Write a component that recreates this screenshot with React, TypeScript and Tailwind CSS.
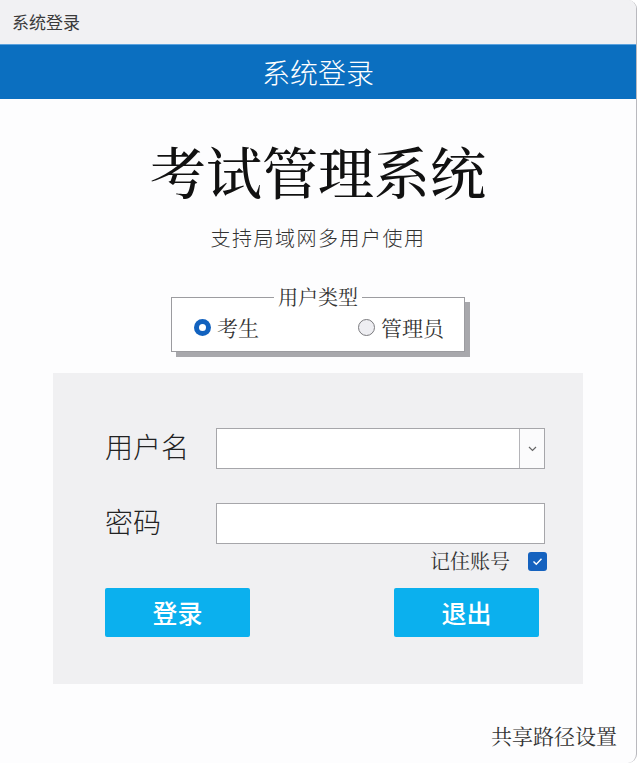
import React from "react";

const serif = "font-['Noto_Serif_CJK_SC','Noto_Sans_CJK_SC',serif]";
const sans = "font-['Noto_Sans_CJK_SC','Liberation_Sans',sans-serif]";

function Radio({ checked, label }: { checked?: boolean; label: string }) {
  return (
    <label className="flex items-center gap-[6px]">
      {checked ? (
        <span className="flex h-[17px] w-[17px] items-center justify-center rounded-full bg-[#1262bf]">
          <span className="h-[7px] w-[7px] rounded-full bg-white" />
        </span>
      ) : (
        <span className="h-[17px] w-[17px] rounded-full border border-[#7a7a7e] bg-[#eeeef2]" />
      )}
      <span className={`${serif} text-[21px] leading-none text-[#333]`}>{label}</span>
    </label>
  );
}

export default function App() {
  return (
    <div className="h-[763px] w-[640px] overflow-hidden bg-white">
      <div
        className={`${sans} flex h-[763px] w-[637px] flex-col overflow-hidden rounded-r-[9px] border-r border-[#b9b9be] bg-[#fdfdfe]`}
      >
        <div className="flex h-[44px] items-center bg-[#f1f1f3] pl-3 text-[17px] text-[#3a3a3a]">
          系统登录
        </div>
        <div className="flex h-[55px] items-center justify-center border-t border-[#5aa2de] bg-[#0b6fc0] text-[28px] font-light text-white">
          系统登录
        </div>

        <h1
          className={`${serif} mt-[43px] text-center text-[56px] leading-[56px] font-medium text-[#111]`}
        >
          考试管理系统
        </h1>
        <p className="mt-[28px] text-center text-[20px] leading-[24px] font-light tracking-[1.5px] text-[#333]">
          支持局域网多用户使用
        </p>

        <fieldset className="mx-auto mt-[35px] h-[67px] w-[294px] border border-[#9c9ca0] bg-white shadow-[5px_5px_0_#a8a8ac]">
          <legend className={`${serif} mx-auto px-1 text-[20px] leading-[24px] text-[#333]`}>
            用户类型
          </legend>
          <div className="mt-[8px] flex items-center pl-[22px]">
            <Radio checked label="考生" />
            <div className="ml-[99px]">
              <Radio label="管理员" />
            </div>
          </div>
        </fieldset>

        <div className="mx-auto mt-[21px] h-[311px] w-[530px] bg-[#f0f0f2] pt-[55px] pl-[52px]">
          <div className="flex h-[41px] items-center">
            <span className="mb-[6px] w-[111px] text-[28px] leading-none font-light text-[#222]">
              用户名
            </span>
            <div className="flex h-[41px] w-[329px] border border-[#a6a6aa] bg-white">
              <div className="flex-1" />
              <div className="flex w-[25px] items-center justify-center border-l border-[#b4b4b8] bg-[#fbfbfc]">
                <svg width="9" height="6" viewBox="0 0 9 6" fill="none">
                  <path d="M1 1l3.5 3.5L8 1" stroke="#666" strokeWidth="1.2" />
                </svg>
              </div>
            </div>
          </div>

          <div className="mt-[34px] flex h-[41px] items-center">
            <span className="mb-[6px] w-[111px] text-[28px] leading-none font-light text-[#222]">
              密码
            </span>
            <div className="h-[41px] w-[329px] border border-[#a6a6aa] bg-white" />
          </div>

          <div className="mt-[7px] flex w-[442px] items-center justify-end gap-[18px]">
            <span className={`${serif} text-[20px] leading-[20px] text-[#333]`}>记住账号</span>
            <span className="flex h-[19px] w-[19px] items-center justify-center rounded-[3px] bg-[#1562bf]">
              <svg width="11" height="9" viewBox="0 0 11 9" fill="none">
                <path d="M1.5 4.5l2.8 2.8L9.5 1.8" stroke="white" strokeWidth="1.4" />
              </svg>
            </span>
          </div>

          <div className="mt-[17px] flex w-[434px] justify-between">
            <button className="h-[49px] w-[145px] rounded-[2px] bg-[#0bb0ee] text-[25px] font-medium text-white">
              登录
            </button>
            <button className="h-[49px] w-[145px] rounded-[2px] bg-[#0bb0ee] text-[25px] font-medium text-white">
              退出
            </button>
          </div>
        </div>

        <div className="mt-[39px] flex justify-end pr-[19px]">
          <span className={`${serif} text-[21px] leading-[24px] text-[#333]`}>共享路径设置</span>
        </div>
      </div>
    </div>
  );
}
